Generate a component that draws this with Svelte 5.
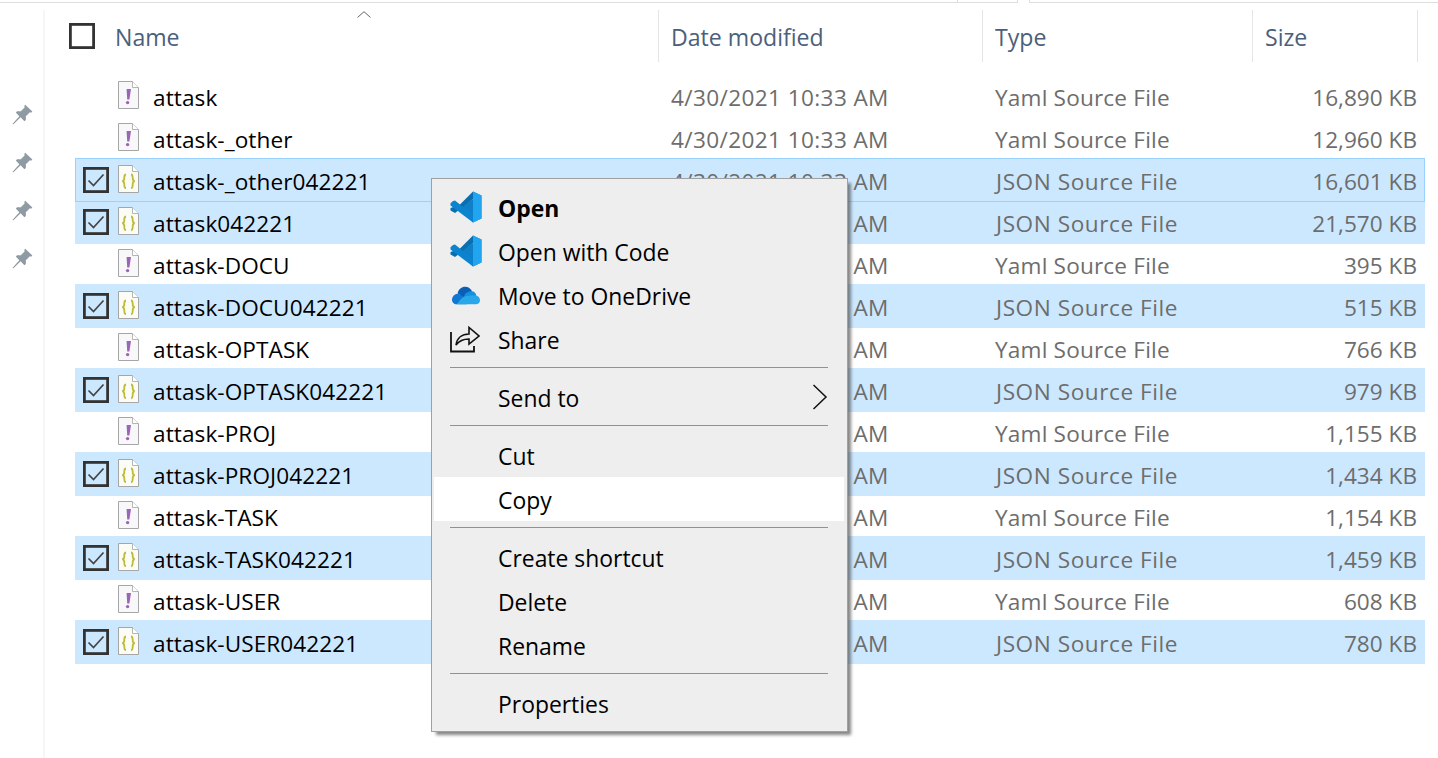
<script>
  const DATE = '4/30/2021 10:33 AM';
  const files = [
    ['attask', 'y', '16,890 KB'],
    ['attask-_other', 'y', '12,960 KB'],
    ['attask-_other042221', 'j', '16,601 KB', true],
    ['attask042221', 'j', '21,570 KB'],
    ['attask-DOCU', 'y', '395 KB'],
    ['attask-DOCU042221', 'j', '515 KB'],
    ['attask-OPTASK', 'y', '766 KB'],
    ['attask-OPTASK042221', 'j', '979 KB'],
    ['attask-PROJ', 'y', '1,155 KB'],
    ['attask-PROJ042221', 'j', '1,434 KB'],
    ['attask-TASK', 'y', '1,154 KB'],
    ['attask-TASK042221', 'j', '1,459 KB'],
    ['attask-USER', 'y', '608 KB'],
    ['attask-USER042221', 'j', '780 KB']
  ];
  const menu = [
    [['Open', 'vs', true], ['Open with Code', 'vs'], ['Move to OneDrive', 'od'], ['Share', 'sh']],
    [['Send to', '', false, true]],
    [['Cut'], ['Copy', '', false, false, true]],
    [['Create shortcut'], ['Delete'], ['Rename']],
    [['Properties']]
  ];
</script>

{#snippet pin()}
  <svg class="pin" viewBox="0 0 20 20" width="21" height="21"><path d="M12.6 0.6 19.4 7.2 18.2 8.4 17 7.8 13.2 11.6 13.2 15.2 11.8 16.4 8.2 12.6 1.4 19.4 0.4 19 7 11.6 3.6 8.2 4.8 6.8 8.4 6.8 12.2 3 11.6 1.8Z" /></svg>
{/snippet}

{#snippet check()}
  <svg class="box" viewBox="0 0 26 26" width="26" height="26"><rect x="1.4" y="1.4" width="23.2" height="23.2" fill="none" stroke="#333" stroke-width="2.8" /><path d="M5.5 13.5 10.5 18.5 20.5 7.5" fill="none" stroke="#444" stroke-width="1.7" /></svg>
{/snippet}

{#snippet fileIcon(kind)}
  <svg class="file" viewBox="0 0 21 28" width="21" height="28">
    <path d="M.5.5H14.5L20.5 6.5V27.5H.5Z" fill={kind === 'y' ? '#f8f8fb' : '#fcfcf6'} stroke="#a6a6a6" />
    <path d="M14.5.5V6.5H20.5" fill="#fff" stroke="#b5b5b5" />
    {#if kind === 'y'}
      <path d="M8.6 8H13L11.4 18.5H9.2Z" fill="#9b64b5" /><circle cx="9.6" cy="21.6" r="1.7" fill="#9b64b5" />
    {:else}
      <path d="M8 9.5C6.3 9.5 6.3 11 6.3 13 6.3 15 6 16 4.2 16.2 6 16.4 6.3 17.4 6.3 19.4 6.3 21.4 6.3 23 8 23M13 9.5C14.7 9.5 14.7 11 14.7 13 14.7 15 15 16 16.8 16.2 15 16.4 14.7 17.4 14.7 19.4 14.7 21.4 14.7 23 13 23" fill="none" stroke="#bcbc3a" stroke-width="1.8" />
    {/if}
  </svg>
{/snippet}

{#snippet vscode()}
  <svg viewBox="0 0 32 32" width="32" height="32">
    <path d="M23 .5 31.5 4.5V27.5L23 31.5 10 17 23 8Z" fill="#0e7fc9" />
    <path d="M23 .5 31.5 4.5V27.5L23 31.5Z" fill="#22a5f1" />
    <path d="M23 .5 23 8 5 22 .5 19.5V17L5 15.5 7 16.5Z" fill="#0a6fb0" />
    <path d="M3 10 .5 12.2V14.5L23 31.5V24L5 9.5Z" fill="#0b84d0" />
  </svg>
{/snippet}

{#snippet onedrive()}
  <svg class="od" viewBox="0 0 30 20" width="28" height="19">
    <path d="M6 7.5C7 3 10.5.5 14 .5 17.5.5 20 2.5 21.5 5.5L13 13Z" fill="#0a5fb4" />
    <path d="M5 19.5C2 19.5 0 17 0 14.5 0 11 3 8 7 8.2L13 12 16 19.5Z" fill="#0f78d4" />
    <path d="M13.5 9C15.5 6.5 18.5 5 21.5 5.5 24.5 6 26 8.2 26 10L22 14 13.5 11Z" fill="#1490df" />
    <path d="M5 19.5C8 16 11 11 15 10.6 18 10 22 10 26 10 28.5 10.6 30 12.8 30 15 30 17.5 28 19.5 25.5 19.5Z" fill="#28a8ea" />
  </svg>
{/snippet}

{#snippet share()}
  <svg viewBox="0 0 30 28" width="30" height="28" fill="none" stroke="#111" stroke-width="1.8">
    <path d="M1 7V26.5H24V21" />
    <path d="M6 20C7 13 12 9 19 9V2.5L29 11 19 19V14C14 14 9 16 6 20Z" stroke-width="1.6" />
  </svg>
{/snippet}

<div class="page">
  <div class="topline"><span class="seg first"></span><span class="seg second"></span><span class="gap"></span><span class="seg rest"></span></div>
  <div class="body">
    <aside class="pins">{#each [0, 1, 2, 3] as i (i)}{@render pin()}{/each}</aside>
    <main class="list">
      <header class="head">
        <div class="col c-name">
          <svg class="headbox" viewBox="0 0 26 26" width="26" height="26"><rect x="1.4" y="1.4" width="23.2" height="23.2" fill="#fff" stroke="#333" stroke-width="2.8" /></svg>
          <span>Name</span>
          <svg class="sort" viewBox="0 0 14 7" width="14" height="7"><path d="M.5 6.5 7 .7 13.5 6.5" fill="none" stroke="#666" stroke-width="1" /></svg>
        </div>
        <div class="col c-date"><span>Date modified</span></div>
        <div class="col c-type"><span>Type</span></div>
        <div class="col c-size"><span>Size</span></div>
      </header>
      <div class="rows">
        {#each files as f (f[0])}
          <div class="row" class:sel={f[1] === 'j'} class:focus={f[3]}>
            <div class="namecell">
              <span class="slot">{#if f[1] === 'j'}{@render check()}{/if}</span>
              {@render fileIcon(f[1])}
              <span class="fname">{f[0]}</span>
            </div>
            <div class="meta d">{DATE}</div>
            <div class="meta t" class:json={f[1] === 'j'}>{f[1] === 'y' ? 'Yaml' : 'JSON'} Source File</div>
            <div class="meta s">{f[2]}</div>
          </div>
        {/each}
      </div>
    </main>
  </div>

  <nav class="menu">
    {#each menu as group, g (g)}
      {#if g > 0}<div class="sep"></div>{/if}
      {#each group as it (it[0])}
        <div class="item" class:bold={it[2]} class:hot={it[4]}>
          <span class="ico">
            {#if it[1] === 'vs'}{@render vscode()}{:else if it[1] === 'od'}{@render onedrive()}{:else if it[1] === 'sh'}{@render share()}{/if}
          </span>
          <span class="label">{it[0]}</span>
          {#if it[3]}<svg class="arrow" viewBox="0 0 16 26" width="16" height="26"><path d="M1.5 1 14 13 1.5 25" fill="none" stroke="#111" stroke-width="1.5" /></svg>{/if}
        </div>
      {/each}
    {/each}
  </nav>
</div>

<style>
  :global(body) { margin: 0; background: #fff; }
  .page { position: relative; width: 1438px; height: 758px; overflow: hidden; background: #fff; font-family: "Open Sans", "Noto Sans", sans-serif; font-size: 22.6px; color: #000; }
  .topline { display: flex; height: 3px; }
  .seg { box-sizing: border-box; height: 3px; border-bottom: 1px solid #dedede; }
  .first { width: 958px; border-right: 1px solid #dedede; }
  .second { width: 60px; border-right: 1px solid #dedede; }
  .gap { width: 11px; }
  .rest { flex: 1; border-left: 1px solid #dedede; }
  .body { display: flex; height: 755px; }
  .pins { width: 43px; flex: none; box-sizing: border-box; padding: 101px 0 0 12px; display: flex; flex-direction: column; gap: 27px; }
  .pin { fill: #8f9ba3; display: block; }
  .list { flex: 1; margin-top: 7px; border-left: 2px solid #f6f6f6; padding-left: 30px; min-width: 0; }
  .head { display: flex; height: 52px; color: #4c607a; font-size: 23.1px; }
  .col { box-sizing: border-box; display: flex; align-items: center; padding-left: 12px; border-right: 1px solid #e5e5e5; }
  .col span { padding-top: 2px; }
  .c-name { position: relative; width: 584px; padding-left: 0; }
  .c-name span { margin-left: 20px; }
  .headbox { margin-left: -6px; display: block; }
  .sort { position: absolute; left: 282px; top: 1px; }
  .c-date { width: 324px; }
  .c-type { width: 270px; }
  .c-size { width: 165px; }
  .rows { margin-top: 12px; width: 1350px; }
  .row { box-sizing: border-box; height: 44px; margin-bottom: -2px; display: grid; grid-template-columns: 596px 324px 270px 160px; align-items: center; position: relative; padding-top: 2px; }
  .sel { background: #cce8ff; }
  .focus { box-shadow: inset 0 0 0 1px #99d1ff; z-index: 1; }
  .namecell { display: flex; align-items: center; margin-top: -2px; }
  .slot { width: 43px; box-sizing: border-box; padding-left: 8px; display: block; height: 26px; flex: none; }
  .box { display: block; }
  .file { flex: none; display: block; margin-bottom: 3px; }
  .fname { margin-left: 14px; padding-top: 2px; letter-spacing: .08px; }
  .meta { color: #6d6d6d; white-space: nowrap; }
  .d { letter-spacing: .38px; }
  .t { letter-spacing: .18px; }
  .json { letter-spacing: .56px; padding-left: 1px; }
  .s { text-align: right; padding-right: 8px; }
  .menu { position: absolute; z-index: 5; left: 431px; top: 178px; width: 417px; height: 554px; box-sizing: border-box; background: #eee; border: 1px solid #a0a0a0; padding: 6px 3px 0 2px; box-shadow: 4px 4px 3px -1px rgba(70, 70, 70, .65); font-size: 22.9px; }
  .item { position: relative; height: 44px; display: flex; align-items: center; }
  .ico { width: 64px; box-sizing: border-box; padding-left: 16px; flex: none; display: flex; align-items: center; }
  .ico :global(svg) { display: block; }
  .ico :global(svg.od) { margin-left: 2px; }
  .label { padding-top: 2px; }
  .bold { font-weight: 700; }
  .hot { background: #fff; }
  .sep { height: 1px; background: #919191; margin: 6px 16px 7px 16px; }
  .arrow { position: absolute; left: 378px; top: 9px; }
</style>
